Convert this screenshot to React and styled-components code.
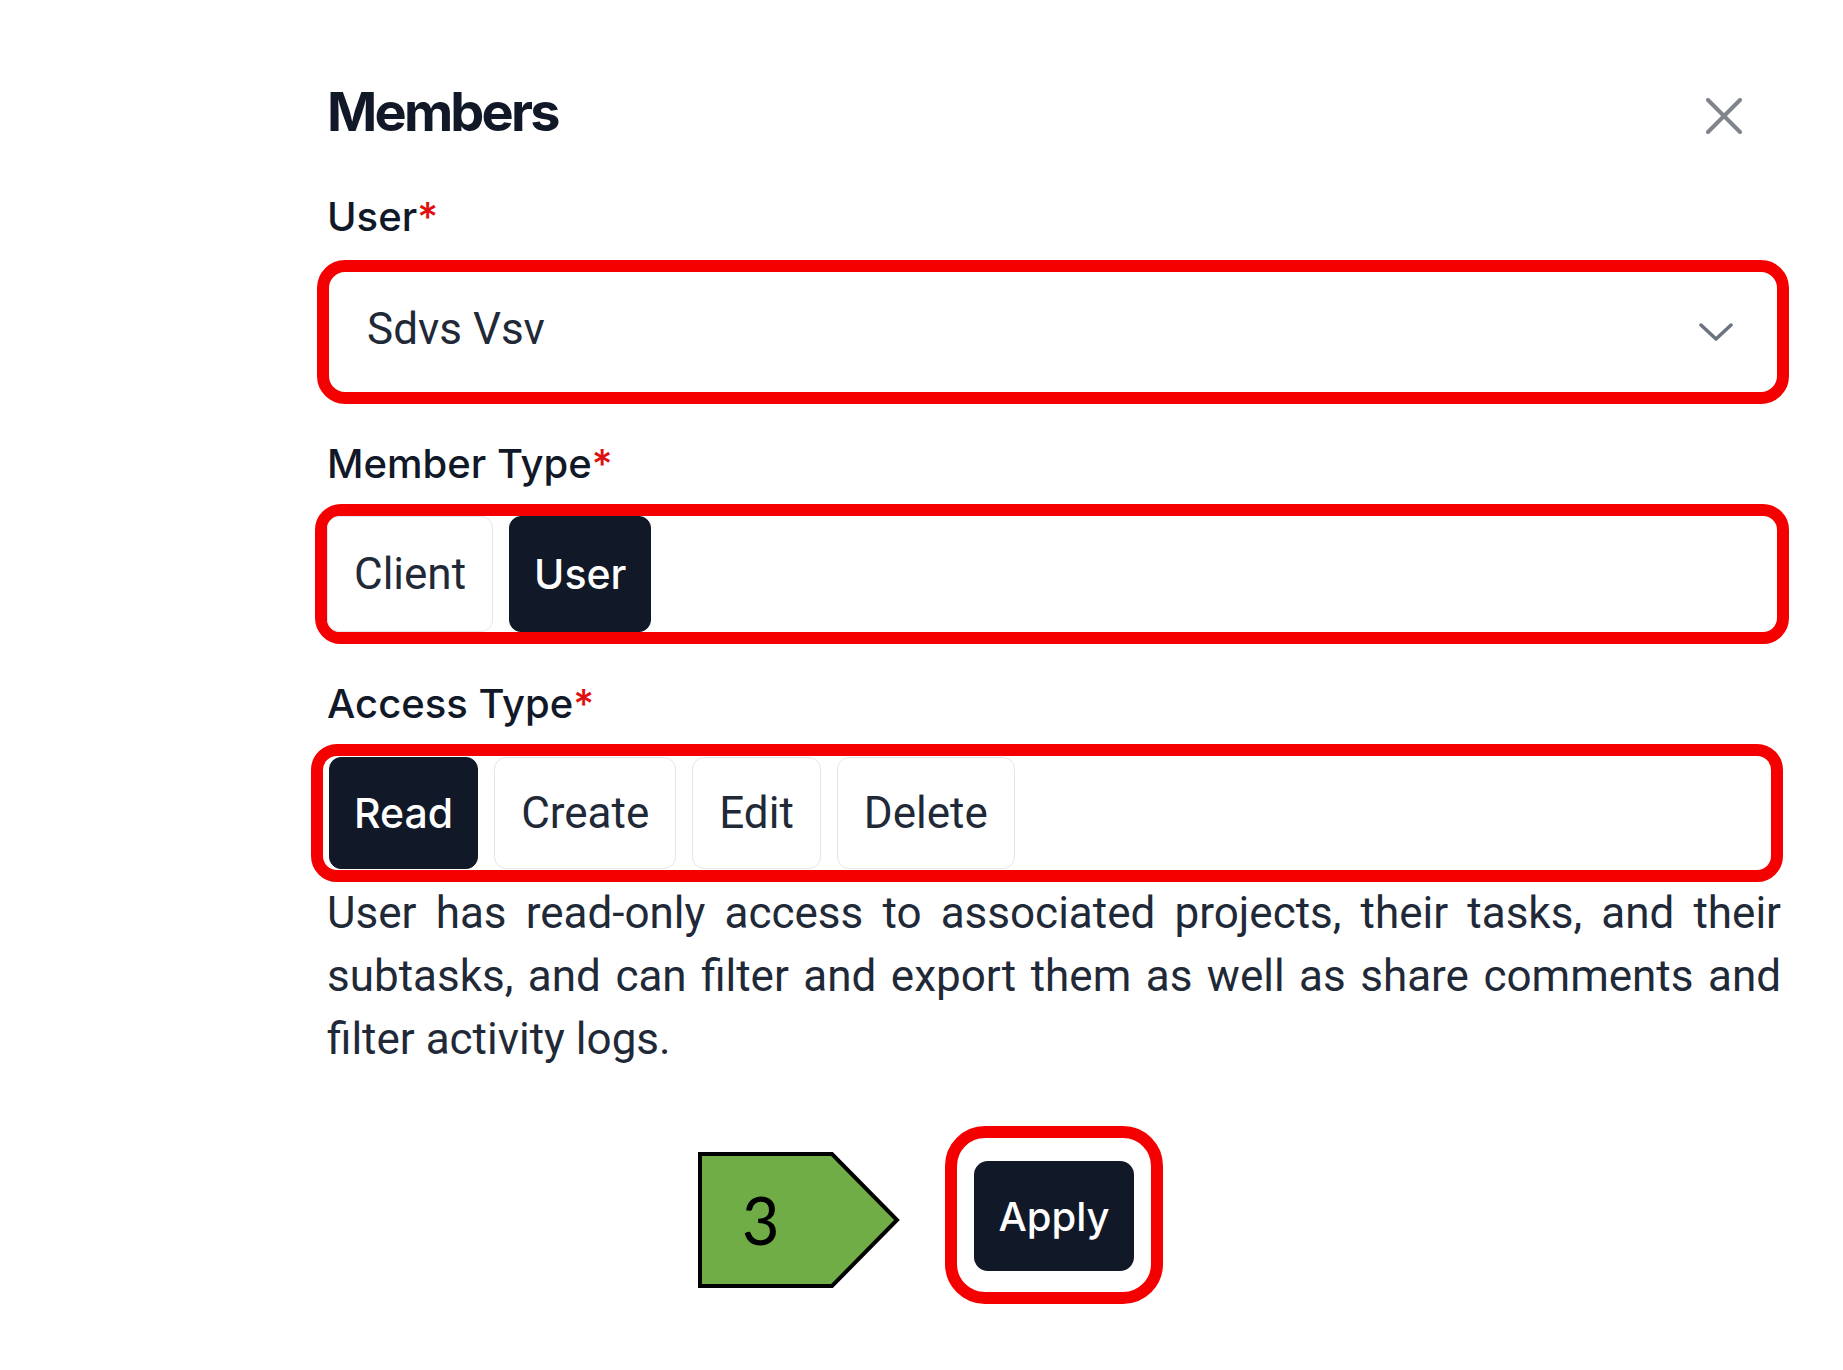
import styled, { createGlobalStyle } from "styled-components";

const GlobalStyle = createGlobalStyle`
  body {
    margin: 0;
    background: #ffffff;
    font-family: "Inter", "Roboto", sans-serif;
  }
`;

const Panel = styled.div`
  width: 1454px;
  margin-left: 327px;
  padding-top: 85px;
  padding-bottom: 60px;
`;

const Header = styled.div`
  display: flex;
  justify-content: space-between;
  align-items: center;
  height: 54px;
`;

const Title = styled.h2`
  margin: 0;
  font-family: "Inter", sans-serif;
  font-weight: 700;
  font-size: 54px;
  line-height: 54px;
  letter-spacing: -2.8px;
  color: #111827;
`;

const CloseButton = styled.button`
  display: flex;
  padding: 0;
  margin-right: 39px;
  margin-top: 8px;
  border: none;
  background: none;
  cursor: pointer;
`;

const Field = styled.div`
  margin-top: ${(p) => p.$top || 37}px;
`;

const Label = styled.div`
  font-family: "Inter", sans-serif;
  font-weight: 500;
  font-size: 40px;
  line-height: 46px;
  color: #111827;
  margin-bottom: ${(p) => p.$gap || 17}px;
  span {
    color: #e10f0f;
  }
`;

const Highlight = styled.div`
  border: 12px solid #f40000;
  border-radius: ${(p) => p.$radius || 26}px;
  margin: 0 ${(p) => p.$right || 0}px 0 ${(p) => p.$left || 0}px;
  padding: ${(p) => p.$pad || "0"};
`;

const Select = styled.div`
  height: 120px;
  box-sizing: border-box;
  display: flex;
  align-items: center;
  justify-content: space-between;
  padding: 0 44px 6px 38px;
  font-family: "Roboto", sans-serif;
  font-size: 44px;
  color: #1f2937;
  svg {
    margin-top: 6px;
  }
`;

const Options = styled.div`
  display: flex;
  gap: 16px;
`;

const Option = styled.button`
  height: ${(p) => p.$h}px;
  padding: 0 ${(p) => (p.$active ? 24 : 26)}px;
  border-radius: 12px;
  border: 1px solid ${(p) => (p.$active ? "#111827" : "#e3e5ea")};
  background: ${(p) => (p.$active ? "#111827" : "#ffffff")};
  color: ${(p) => (p.$active ? "#ffffff" : "#1f2937")};
  font-family: ${(p) => (p.$active ? '"Inter", sans-serif' : '"Roboto", sans-serif')};
  font-weight: ${(p) => (p.$active ? 500 : 400)};
  font-size: ${(p) => (p.$active ? 41 : 44)}px;
  cursor: pointer;
`;

const Description = styled.p`
  margin: 0;
  font-family: "Roboto", sans-serif;
  font-size: 44px;
  line-height: 63px;
  text-align: justify;
  color: #1f2937;
`;

const Footer = styled.div`
  margin-top: 55px;
  display: flex;
  justify-content: center;
`;

const ApplyWrap = styled.div`
  position: relative;
`;

const ApplyButton = styled.button`
  width: 160px;
  height: 110px;
  border: none;
  border-radius: 14px;
  background: #111827;
  color: #ffffff;
  font-family: "Inter", sans-serif;
  font-weight: 500;
  font-size: 40px;
  cursor: pointer;
`;

const Step = styled.div`
  position: absolute;
  right: calc(100% + 45px);
  top: 26px;
  width: 202px;
  height: 136px;
  svg {
    position: absolute;
    inset: 0;
  }
`;

const StepNumber = styled.span`
  position: absolute;
  left: 36px;
  top: 0;
  width: 52px;
  line-height: 136px;
  text-align: center;
  font-family: "Carlito", "Liberation Sans", sans-serif;
  font-size: 74px;
  color: #000000;
`;

const XIcon = () => (
  <svg width="36" height="36" viewBox="0 0 36 36">
    <path d="M2 2 L34 34 M34 2 L2 34" stroke="#80848c" strokeWidth="4" strokeLinecap="round" fill="none" />
  </svg>
);

const Chevron = () => (
  <svg width="34" height="18" viewBox="0 0 34 18">
    <polyline points="2,2 17,16 32,2" stroke="#6b7280" strokeWidth="3.5" strokeLinecap="round" strokeLinejoin="round" fill="none" />
  </svg>
);

const memberTypes = ["Client", "User"];
const accessTypes = ["Read", "Create", "Edit", "Delete"];

export default function App() {
  return (
    <>
      <GlobalStyle />
      <Panel>
        <Header>
          <Title>Members</Title>
          <CloseButton aria-label="Close">
            <XIcon />
          </CloseButton>
        </Header>

        <Field $top={55}>
          <Label $gap={20}>
            User<span>*</span>
          </Label>
          <Highlight $left={-10} $right={-8} $radius={28}>
            <Select>
              Sdvs Vsv
              <Chevron />
            </Select>
          </Highlight>
        </Field>

        <Field>
          <Label>
            Member Type<span>*</span>
          </Label>
          <Highlight $left={-12} $right={-8} $radius={26}>
            <Options>
              {memberTypes.map((t) => (
                <Option key={t} $h={116} $active={t === "User"}>
                  {t}
                </Option>
              ))}
            </Options>
          </Highlight>
        </Field>

        <Field>
          <Label>
            Access Type<span>*</span>
          </Label>
          <Highlight $left={-16} $right={-2} $radius={26} $pad="1px 6px">
            <Options>
              {accessTypes.map((t) => (
                <Option key={t} $h={112} $active={t === "Read"}>
                  {t}
                </Option>
              ))}
            </Options>
          </Highlight>
        </Field>

        <Description>
          User has read-only access to associated projects, their tasks, and their subtasks, and can
          filter and export them as well as share comments and filter activity logs.
        </Description>

        <Footer>
          <ApplyWrap>
            <Step>
              <svg width="202" height="136" viewBox="0 0 202 136">
                <polygon points="2,2 134,2 199,68 134,134 2,134" fill="#70ad47" stroke="#000" strokeWidth="4" />
              </svg>
              <StepNumber>3</StepNumber>
            </Step>
            <Highlight $radius={40} $pad="23px 17px 21px">
              <ApplyButton>Apply</ApplyButton>
            </Highlight>
          </ApplyWrap>
        </Footer>
      </Panel>
    </>
  );
}
